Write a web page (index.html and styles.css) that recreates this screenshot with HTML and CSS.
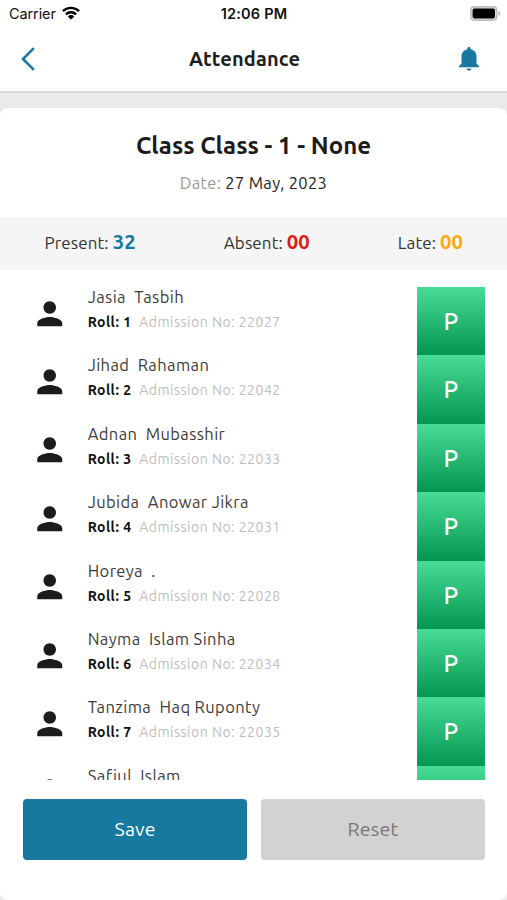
FILE: index.html
```html
<!DOCTYPE html>
<html lang="en">
<head>
<meta charset="utf-8">
<title>Attendance</title>
<link rel="stylesheet" href="styles.css">
</head>
<body>
<svg class="defs" width="0" height="0"><symbol id="person" viewBox="0 0 24 24"><path d="M12 12c2.21 0 4-1.79 4-4s-1.79-4-4-4-4 1.79-4 4 1.79 4 4 4zm0 2c-2.67 0-8 1.34-8 4v2h16v-2c0-2.66-5.33-4-8-4z"/></symbol></svg>
<div class="status">
  <div class="carrier"><span>Carrier</span><svg width="18" height="14" viewBox="0 0 18 14"><g fill="none" stroke="#000" stroke-width="2.4"><path d="M.9 5.2a11.5 11.5 0 0 1 16.2 0"/><path d="M3.9 8.3a7.3 7.3 0 0 1 10.2 0"/></g><path d="M9 13.6 5.8 10.4a4.6 4.6 0 0 1 6.4 0z"/></svg></div>
  <div class="clock">12:06 PM</div>
  <svg class="battery" width="31" height="15" viewBox="0 0 31 15"><rect x=".8" y=".8" width="26" height="13.4" rx="3.4" fill="#ddd" stroke="#bbb" stroke-width="1.4"/><rect x="2.6" y="2.6" width="22.4" height="9.8" rx="1.8"/><path d="M28.5 5.2c2.2.8 2.2 3.8 0 4.6z" fill="#b0b0b0"/></svg>
</div>
<header class="bar">
  <svg class="back" width="14" height="24" viewBox="0 0 14 24"><path d="M12.8 1.2 2 12l10.800 10.800" fill="none" stroke="#17799f" stroke-width="2.6"/></svg>
  <h1>Attendance</h1>
  <svg class="bell" width="20" height="24" viewBox="0 0 20 24"><path d="M10 0c1 0 1.700.7 1.700 1.700v.6c3.600.8 5.800 3.700 5.800 7.300v7l2.500 2.500v1.200H0v-1.200l2.500-2.500v-7c0-3.600 2.200-6.500 5.800-7.300v-.6C8.300.7 9 0 10 0zM7.700 21.500h4.600c0 1.300-1 2.200-2.300 2.200s-2.300-.9-2.300-2.200z" fill="#17799f"/></svg>
</header>
<main class="card">
  <section class="head">
    <h2>Class Class - 1 - None</h2>
    <p class="date"><span>Date: </span>27 May, 2023</p>
  </section>
  <section class="stats">
    <div class="present">Present: <b>32</b></div>
    <div class="absent">Absent: <b>00</b></div>
    <div class="late">Late: <b>00</b></div>
  </section>
  <section class="list">
    <div class="row"><svg class="person"><use href="#person"/></svg><div class="info"><div class="name">Jasia  Tasbih</div><div class="meta"><b>Roll: 1</b><span>Admission No: 22027</span></div></div><div class="mark">P</div></div>
    <div class="row"><svg class="person"><use href="#person"/></svg><div class="info"><div class="name">Jihad  Rahaman</div><div class="meta"><b>Roll: 2</b><span>Admission No: 22042</span></div></div><div class="mark">P</div></div>
    <div class="row"><svg class="person"><use href="#person"/></svg><div class="info"><div class="name">Adnan  Mubasshir</div><div class="meta"><b>Roll: 3</b><span>Admission No: 22033</span></div></div><div class="mark">P</div></div>
    <div class="row"><svg class="person"><use href="#person"/></svg><div class="info"><div class="name">Jubida  Anowar Jikra</div><div class="meta"><b>Roll: 4</b><span>Admission No: 22031</span></div></div><div class="mark">P</div></div>
    <div class="row"><svg class="person"><use href="#person"/></svg><div class="info"><div class="name">Horeya  .</div><div class="meta"><b>Roll: 5</b><span>Admission No: 22028</span></div></div><div class="mark">P</div></div>
    <div class="row"><svg class="person"><use href="#person"/></svg><div class="info"><div class="name">Nayma  Islam Sinha</div><div class="meta"><b>Roll: 6</b><span>Admission No: 22034</span></div></div><div class="mark">P</div></div>
    <div class="row"><svg class="person"><use href="#person"/></svg><div class="info"><div class="name">Tanzima  Haq Ruponty</div><div class="meta"><b>Roll: 7</b><span>Admission No: 22035</span></div></div><div class="mark">P</div></div>
    <div class="row"><svg class="person"><use href="#person"/></svg><div class="info"><div class="name">Safiul  Islam</div></div><div class="mark"></div></div>
  </section>
  <section class="actions">
    <button class="save">Save</button>
    <button class="reset">Reset</button>
  </section>
</main>
</body>
</html>
```
FILE: styles.css
```css
* { box-sizing: border-box; margin: 0; padding: 0; }
body {
  width: 507px;
  height: 900px;
  overflow: hidden;
  display: flex;
  flex-direction: column;
  background: #eaeaea;
  color: #222;
  font-family: Ubuntu, "Noto Sans", sans-serif;
}
.defs { display: none; }
.status {
  height: 28px;
  flex: none;
  display: grid;
  grid-template-columns: 1fr auto 1fr;
  align-items: center;
  padding: 0 6px 0 9px;
  background: #fff;
  color: #111;
  font: 14.5px/28px Inter, sans-serif;
}
.carrier { display: flex; align-items: center; gap: 6px; letter-spacing: -.1px; }
.carrier svg { margin-top: -2px; }
.clock { font-weight: 600; font-size: 14.5px; letter-spacing: .2px; padding-right: 2px; }
.battery { justify-self: end; margin-top: -2px; }
.bar {
  height: 65px;
  flex: none;
  display: grid;
  grid-template-columns: 1fr auto 1fr;
  align-items: center;
  padding: 0 28px 3px 21px;
  background: #fff;
  border-bottom: 2px solid #d8d8d8;
}
.bar h1 { font-size: 20px; letter-spacing: .15px; font-weight: 700; line-height: 26px; color: #1e1e1e; padding: 1px 11px 0 0; }
.back, .bell { margin-top: 1px; }
.bell { justify-self: end; }
.card {
  flex: 1;
  margin-top: 15px;
  background: #fff;
  border-radius: 8px;
  overflow: hidden;
}
.head { height: 109px; padding-top: 21px; text-align: center; }
.head h2 { font-size: 24px; line-height: 34px; font-weight: 700; color: #1b1b1b; }
.date { margin-top: 9px; font-size: 16.5px; letter-spacing: .33px; line-height: 22px; }
.date span { color: #999; }
.stats {
  height: 53px;
  display: flex;
  justify-content: space-between;
  padding: 0 44px 0 44.500px;
  background: #f5f5f5;
  color: #333;
  font-size: 17px;
  letter-spacing: .1px;
  line-height: 50px;
}
.stats b { font-size: 20.3px; }
.present b { color: #17799f; }
.absent b { color: #e0180f; }
.late b { color: #fba90a; }
.list { height: 510px; padding: 17px 22px 0 30.600px; overflow: hidden; }
.row { height: 68.400px; display: flex; }
.person { width: 37.500px; height: 37.500px; margin-top: 7.600px; fill: #1c1c1c; }
.info { flex: 1; padding-left: 19.600px; }
.name { height: 24px; font-size: 16.5px; letter-spacing: .4px; line-height: 21px; white-space: pre; color: #3c3c3c; }
.meta { display: flex; gap: 8px; font-size: 14px; letter-spacing: .5px; line-height: 23px; white-space: nowrap; }
.meta b { width: 43.500px; color: #111; letter-spacing: .45px; }
.meta span { color: #bdbdbd; }
.mark {
  width: 68.500px;
  height: 68.400px;
  background: linear-gradient(#49dc96, #029650);
  color: #fff;
  font-size: 24px;
  font-weight: 500;
  line-height: 70px;
  text-align: center;
}
.actions { display: flex; gap: 13.500px; padding: 18.500px 22px 0 23px; }
.actions button {
  flex: 1;
  height: 61px;
  border: 0;
  border-radius: 4px;
  font: 19.5px/61px Ubuntu, "Noto Sans", sans-serif;
  letter-spacing: .2px;
}
.save { background: #17799f; color: #fff; }
.reset { background: #d2d2d2; color: #777; }
```
